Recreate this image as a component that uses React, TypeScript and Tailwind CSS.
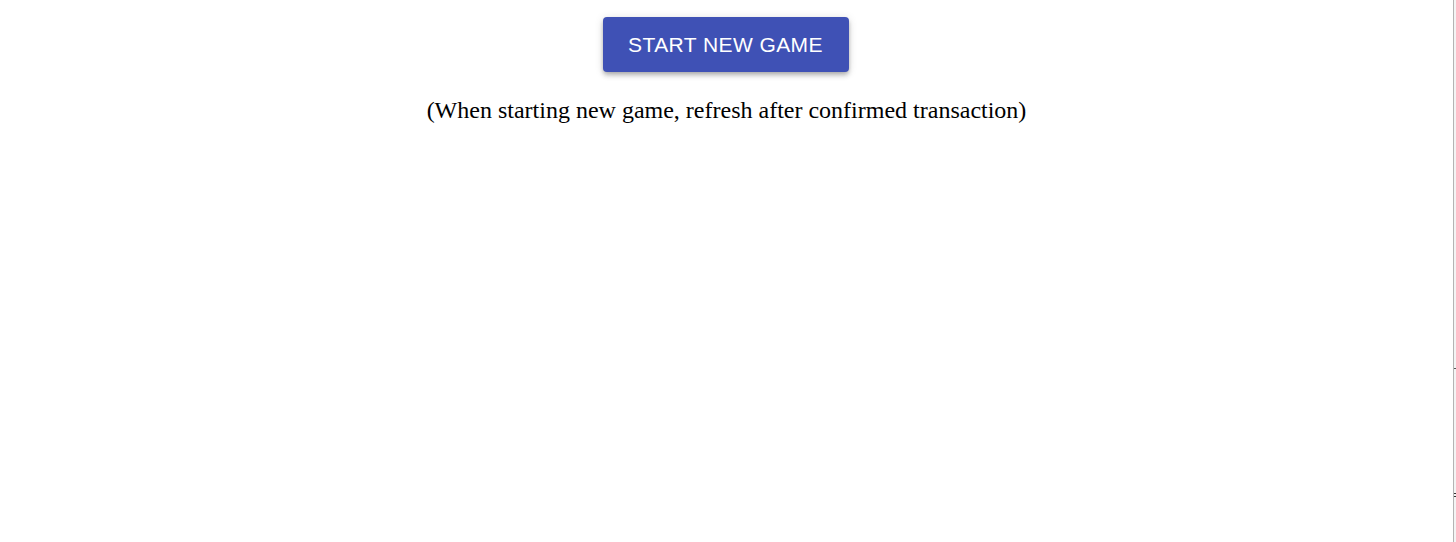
import React from 'react';

export default function App() {
  return (
    <div className="flex h-[542px] w-full bg-white">
      <div className="flex flex-1 flex-col items-center pt-[17px]">
        <button
          type="button"
          className="-translate-x-px h-[55px] w-[246px] rounded-[4px] bg-[#3f51b5] text-[21px] uppercase tracking-[0.02em] text-white shadow-[0_2px_4px_-1px_rgba(0,0,0,0.2),0_4px_5px_0_rgba(0,0,0,0.14),0_1px_10px_0_rgba(0,0,0,0.12)] font-['Liberation_Sans',Arial,sans-serif]"
        >
          Start New Game
        </button>
        <p className="mt-[24px] text-[24px] leading-[28px] text-black font-['Liberation_Serif',serif]">
          (When starting new game, refresh after confirmed transaction)
        </p>
      </div>
      <div className="relative w-[3px] border-l border-[#b4b4b4] bg-[#f4f4f4]">
        <div className="absolute left-0 top-[368px] h-px w-[3px] bg-[#555]" />
        <div className="absolute left-0 top-[493px] h-px w-[3px] bg-[#333]" />
        <div className="absolute left-0 top-[496px] h-px w-[3px] bg-[#333]" />
      </div>
    </div>
  );
}
